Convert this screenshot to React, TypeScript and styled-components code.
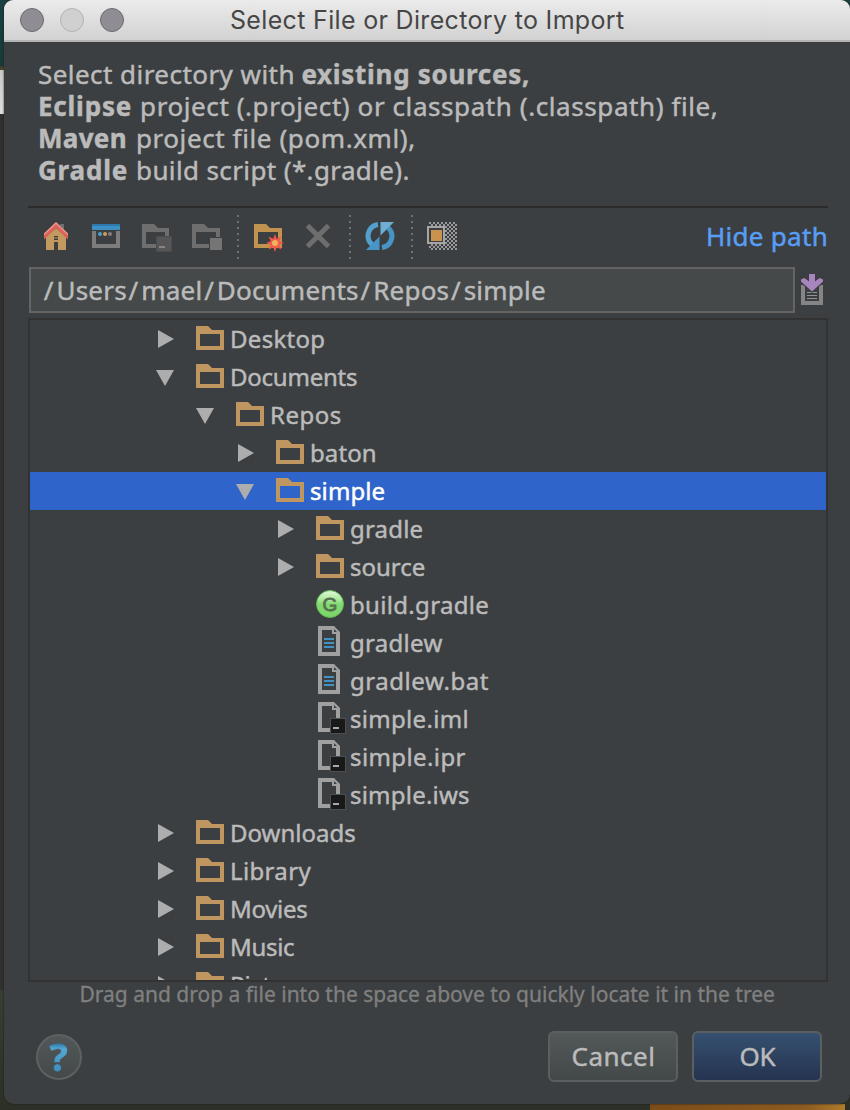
import React from 'react';
import styled, { createGlobalStyle } from 'styled-components';

const GlobalStyle = createGlobalStyle`
  * { box-sizing: border-box; }
  body { margin: 0; background: #2c3026; }
  svg { display: block; }
`;

const Desktop = styled.div`
  display: flex;
  width: 850px;
  height: 1110px;
  overflow: hidden;
  font-family: 'Noto Sans', sans-serif;
  background:
    linear-gradient(90deg, #7c4c18, #8d5c20 80%, #b07c2c) 650px 1104px / 195px 6px no-repeat,
    linear-gradient(#1b403f 0, #173b39 66px, #4a4528 67px, #4a4528 70px, #c9c9c9 70px, #dedede 114px, #303030 114px, #303030 990px, #393f2f 990px, #2c3026 1110px);
`;

const Window = styled.main`
  display: flex;
  flex-direction: column;
  width: 846px;
  height: 1104px;
  margin-left: 4px;
  overflow: hidden;
  border-radius: 9px 9px 10px 10px;
  background: #3c3f41;
  box-shadow: 0 0 2px #16191a;
`;

const TitleBar = styled.header`
  display: grid;
  grid-template-columns: 226px 1fr;
  align-items: center;
  height: 42px;
  border-bottom: 2px solid #b4b4b4;
  background: linear-gradient(#ebebeb, #d2d2d2);
`;

const WindowControls = styled.div`
  display: flex;
  gap: 16px;
  padding-left: 16px;
`;

const Control = styled.span<{ $disabled?: boolean }>`
  width: 24px;
  height: 24px;
  border-radius: 50%;
  border: 1px solid ${p => (p.$disabled ? '#b2b2b2' : '#6c6b70')};
  background: ${p => (p.$disabled ? '#d0d0d0' : '#8f8d93')};
`;

const Title = styled.h1`
  margin: 0;
  font: 400 25px/40px Inter, sans-serif;
  letter-spacing: 0.33px;
  color: #464646;
  white-space: nowrap;
`;

const Content = styled.div`
  display: flex;
  flex-direction: column;
  flex: 1;
  padding: 16px 22px 22px 24px;
  -webkit-text-stroke: 0.45px currentColor;
`;

const Description = styled.section`
  height: 148px;
  padding-left: 10px;
  font-size: 26px;
  line-height: 32px;
  color: #bbbbbb;
`;

const Line = styled.p<{ $gap: number }>`
  display: flex;
  gap: ${p => p.$gap}px;
  margin: 0;
  white-space: nowrap;
`;

const Text = styled.span<{ $track: number }>`
  letter-spacing: ${p => p.$track}px;
`;

const Strong = styled.b<{ $track: number }>`
  letter-spacing: ${p => p.$track}px;
`;

const Toolbar = styled.nav`
  display: flex;
  align-items: flex-start;
  height: 61px;
  padding: 7px 0 0 3px;
  border-top: 2px solid #2b2b2b;
`;

const ToolButton = styled.button`
  display: flex;
  align-items: center;
  justify-content: center;
  width: 50px;
  height: 44px;
  padding: 0;
  border: 0;
  background: none;
`;

const Separator = styled.span`
  width: 12px;
  height: 44px;
  background: repeating-linear-gradient(#707375 0 2px, transparent 2px 6px) 6px 0 / 2px 44px no-repeat;
`;

const PathToggle = styled.a`
  margin: 5px 0 0 auto;
  font-size: 26px;
  line-height: 32px;
  letter-spacing: 0.3px;
  color: #589df6;
`;

const PathRow = styled.div`
  display: flex;
  align-items: flex-start;
  gap: 6px;
  height: 51px;
  padding-left: 1px;
`;

const PathField = styled.div`
  display: flex;
  width: 766px;
  height: 46px;
  padding-left: 11px;
  border: 2px solid #646464;
  background: #45494a;
  font-size: 26px;
  line-height: 43px;
  letter-spacing: 0.2px;
  color: #bbbbbb;
`;

const Slash = styled.span`
  padding: 0 2.8px 0 1.8px;
`;

const HistoryButton = styled.button`
  margin-top: 6px;
  padding: 0;
  border: 0;
  background: none;
`;

const Tree = styled.div`
  height: 664px;
  overflow: hidden;
  border: 2px solid #323232;
`;

const Row = styled.div<{ $level: number; $selected?: boolean }>`
  display: grid;
  grid-template-columns: 40px 34px 1fr;
  align-items: start;
  height: 38px;
  padding-left: ${p => 126 + p.$level * 40}px;
  background: ${p => (p.$selected ? '#2f65ca' : 'transparent')};
  color: ${p => (p.$selected ? '#ffffff' : '#bbbbbb')};
`;

const Name = styled.span<{ $track: number }>`
  font-size: 24px;
  line-height: 38px;
  letter-spacing: ${p => p.$track}px;
  white-space: nowrap;
`;

const Hint = styled.p`
  margin: 0;
  padding: 0 0 0 51.5px;
  font-size: 21px;
  line-height: 24px;
  color: #808080;
  white-space: nowrap;
  -webkit-text-stroke-width: 0.3px;
`;

const Footer = styled.footer`
  display: flex;
  align-items: center;
  gap: 14px;
  margin-top: 25px;
  padding: 0 6.5px 0 7.5px;
`;

const HelpButton = styled.button`
  width: 46px;
  height: 46px;
  margin-right: auto;
  padding: 0;
  border: 2px solid #5e6162;
  border-radius: 50%;
  background: linear-gradient(#525759, #444949);
`;

const HelpMark = styled.span`
  display: block;
  font: 700 38px/41px 'Noto Sans', sans-serif;
  color: transparent;
  background: linear-gradient(#2f7db5 8px, #55a8d3 13px, #4596c6 28px, #3a88c0);
  background-clip: text;
  -webkit-text-stroke: 0.8px transparent;
`;

const Button = styled.button<{ $primary?: boolean; $track: number }>`
  width: 130px;
  height: 51px;
  padding: 0 0 1px 2px;
  border: 2px solid #5b5f60;
  border-radius: 6px;
  background: ${p => (p.$primary ? 'linear-gradient(#365070, #253450)' : 'linear-gradient(#535859, #434848)')};
  font: 400 26px/46px 'Noto Sans', sans-serif;
  letter-spacing: ${p => p.$track}px;
  color: #bbbbbb;
  -webkit-text-stroke: 0.45px currentColor;
`;

const Tool = ({ children, label }: { children: React.ReactNode; label: string }) => (
  <ToolButton aria-label={label}>
    <svg width="32" height="32" viewBox="0 0 32 32">{children}</svg>
  </ToolButton>
);

const HomeIcon = () => (
  <Tool label="Home">
    <path d="M20 3h4v9h-4z" fill="#6e6e6e" />
    <path d="M6 16 16 7l10 9v13h-8v-8h-4v8H6z" fill="#c29a5f" />
    <path d="M14 15h4v4h-4z" fill="#3c3f41" />
    <path d="M14 17h4" stroke="#c29a5f" />
    <path d="M4 12.500 16 1l12 11.500v6L16 7 4 18.500z" fill="#dd6157" />
    <path d="M4 12.500 16 1l12 11.500v2L16 3.200 4 14.500z" fill="#e58f88" />
  </Tool>
);

const DesktopIcon = () => (
  <Tool label="Desktop">
    <path d="M2 3h28v6H2z" fill="#3d8fc4" />
    <path d="M2 3h28v2H2z" fill="#2f78ad" />
    <path d="M4 10v15h24V10" fill="none" stroke="#7d7d7d" strokeWidth="4" />
    <circle cx="10" cy="13" r="2" fill="#4aa0d5" />
    <circle cx="15" cy="13" r="2" fill="#d19a58" />
    <circle cx="20" cy="13" r="2" fill="#808080" />
  </Tool>
);

const ProjectFolderIcon = () => (
  <Tool label="Project directory">
    <path fillRule="evenodd" d="M2 3h12l4 4h11v20H2zM6 11v12h19V11z" fill="#6e6e6e" />
    <path d="M16 15h16v16H16z" fill="#4a4c4d" />
    <path d="M17 16h14v14H17z" fill="#565656" />
    <path d="M19 25h6v2h-6z" fill="#858585" />
  </Tool>
);

const ModuleFolderIcon = () => (
  <Tool label="Module directory">
    <path fillRule="evenodd" d="M2 3h12l4 4h12v20H2zM6 11v12h20V11z" fill="#6e6e6e" />
    <path d="M19 16h13v13H19z" fill="#3c3f41" />
    <path d="M20 17h12v12H20z" fill="#757575" />
  </Tool>
);

const NewFolderIcon = () => (
  <Tool label="New folder">
    <path fillRule="evenodd" d="M2 3h12l4 4h12v20H2zM6 11v12h20V11z" fill="#c2934e" />
    <path d="m23 13 1.700 4.800 4.700-2.200-2.200 4.700 4.800 1.700-4.800 1.700 2.200 4.700-4.700-2.200L23 31l-1.700-4.800-4.700 2.200 2.200-4.700L14 22l4.800-1.700-2.200-4.700 4.700 2.200z" fill="#f4574a" />
    <circle cx="23" cy="22" r="3" fill="#eeb45d" />
  </Tool>
);

const DeleteIcon = () => (
  <Tool label="Delete">
    <path d="m5.500 4.500 21 21M26.500 4.500l-21 21" stroke="#6e6e6e" strokeWidth="5" />
  </Tool>
);

const RefreshIcon = () => (
  <Tool label="Refresh">
    <path d="M14 3.500A11.500 11.500 0 0 0 8 23.500" fill="none" stroke="#539fcd" strokeWidth="5" />
    <path d="M2 29h14V15z" fill="#4795c6" />
    <path d="M18 26.500A11.500 11.500 0 0 0 24 6.500" fill="none" stroke="#4795c6" strokeWidth="5" />
    <path d="M30 1H16v14z" fill="#6eadd4" />
    <path d="M15.500 1h1v28h-1z" fill="#3c3f41" />
  </Tool>
);

const HiddenFilesIcon = () => (
  <Tool label="Show hidden files">
    <defs>
      <pattern id="checker" x="3" y="1" width="4" height="4" patternUnits="userSpaceOnUse">
        <path d="M0 0h2v2H0zM2 2h2v2H2z" fill="#999999" />
      </pattern>
    </defs>
    <path d="M3 1h28v28H3z" fill="url(#checker)" />
    <path d="M1 5h18v18H1z" fill="#a5a5a5" />
    <path d="M3 7h14v14H3z" fill="#3c3f41" />
    <path d="M5 9h11v11H5z" fill="#c9924d" />
  </Tool>
);

const HistoryIcon = () => (
  <svg width="22" height="34" viewBox="0 0 22 34">
    <path d="M2 12v18h18V12" fill="none" stroke="#858585" strokeWidth="4" />
    <path d="M6 19.500h10M6 22.500h10M6 25.500h10" stroke="#929292" strokeWidth="1" />
    <path d="M8 0h6v7l4-3 4 2v4L11 20 0 10V6l4-2 4 3z" fill="#3c3f41" />
    <path d="M8 1h6v7.500l4.500-3.500L22 6.500v2L11 18.500 0 8.500v-2L3.500 5 8 8.500z" fill="#a985bd" />
  </svg>
);

const Arrow = ({ open }: { open: boolean }) => (
  <svg width="20" height="30" viewBox="0 0 20 30">
    <path d={open ? 'M0 12h18L9 28z' : 'M2 10v18l16-9z'} fill="#adadad" />
  </svg>
);

const FolderIcon = () => (
  <svg width="30" height="38" viewBox="0 0 30 38">
    <path fillRule="evenodd" d="M0 6h12l4 4h12v20H0zM4 14v12h20V14z" fill="#c09660" />
  </svg>
);

const GradleIcon = () => (
  <svg width="30" height="38" viewBox="0 0 30 38">
    <defs>
      <linearGradient id="ball" x2="0" y2="1">
        <stop offset="0" stopColor="#e2fada" />
        <stop offset="0.35" stopColor="#a9e898" />
        <stop offset="0.5" stopColor="#83d972" />
        <stop offset="1" stopColor="#79d568" />
      </linearGradient>
    </defs>
    <circle cx="14" cy="18" r="13.500" fill="url(#ball)" stroke="#62b558" />
    <text x="14" y="25" textAnchor="middle" fontFamily="Liberation Sans, sans-serif" fontSize="19" fill="#55724f" stroke="#55724f" strokeWidth="0.9">G</text>
  </svg>
);

const PageShape = () => (
  <path fillRule="evenodd" d="M2 2h16l6 6v24H2zM6 6v22h14V10h-4V6zM18 5v3h3z" fill="#a0a0a0" />
);

const TextFileIcon = () => (
  <svg width="32" height="38" viewBox="0 0 32 38">
    <PageShape />
    <path d="M8 15h10M8 19h10M8 23h10" stroke="#4292c2" strokeWidth="2" />
  </svg>
);

const IdeaFileIcon = () => (
  <svg width="32" height="38" viewBox="0 0 32 38">
    <PageShape />
    <path d="M14 18h16v16H14z" fill="#4c4f51" />
    <path d="M15 19h14v14H15z" fill="#191919" />
    <path d="M17 27h6v2h-6z" fill="#a8a8a8" />
  </svg>
);

type Kind = 'folder' | 'gradle' | 'text' | 'idea';
const icons: Record<Kind, React.FC> = {
  folder: FolderIcon,
  gradle: GradleIcon,
  text: TextFileIcon,
  idea: IdeaFileIcon,
};

interface Entry {
  name: string;
  level: number;
  kind: Kind;
  track: number;
  open?: boolean;
  selected?: boolean;
}

const entries: Entry[] = [
  { name: 'Desktop', level: 0, kind: 'folder', track: 0.3 },
  { name: 'Documents', level: 0, kind: 'folder', track: -0.23, open: true },
  { name: 'Repos', level: 1, kind: 'folder', track: 0.5, open: true },
  { name: 'baton', level: 2, kind: 'folder', track: 0.1 },
  { name: 'simple', level: 2, kind: 'folder', track: 0.1, open: true, selected: true },
  { name: 'gradle', level: 3, kind: 'folder', track: 0.2 },
  { name: 'source', level: 3, kind: 'folder', track: 0 },
  { name: 'build.gradle', level: 3, kind: 'gradle', track: 0.32 },
  { name: 'gradlew', level: 3, kind: 'text', track: 0.3 },
  { name: 'gradlew.bat', level: 3, kind: 'text', track: 0.55 },
  { name: 'simple.iml', level: 3, kind: 'idea', track: 0.3 },
  { name: 'simple.ipr', level: 3, kind: 'idea', track: 0.4 },
  { name: 'simple.iws', level: 3, kind: 'idea', track: 0.21 },
  { name: 'Downloads', level: 0, kind: 'folder', track: 0 },
  { name: 'Library', level: 0, kind: 'folder', track: 0.35 },
  { name: 'Movies', level: 0, kind: 'folder', track: -0.3 },
  { name: 'Music', level: 0, kind: 'folder', track: -0.3 },
  { name: 'Pictures', level: 0, kind: 'folder', track: 0 },
];

const path = ['Users', 'mael', 'Documents', 'Repos', 'simple'];

export default function App() {
  return (
    <Desktop>
      <GlobalStyle />
      <Window>
        <TitleBar>
          <WindowControls>
            <Control />
            <Control $disabled />
            <Control />
          </WindowControls>
          <Title>Select File or Directory to Import</Title>
        </TitleBar>
        <Content>
          <Description>
            <Line $gap={6.5}>
              <Text $track={0.45}>Select directory with</Text>
              <Strong $track={0.7}>existing sources,</Strong>
            </Line>
            <Line $gap={8}>
              <Strong $track={0.8}>Eclipse</Strong>
              <Text $track={0.58}>project (.project) or classpath (.classpath) file,</Text>
            </Line>
            <Line $gap={9}>
              <Strong $track={0.3}>Maven</Strong>
              <Text $track={0.6}>project file (pom.xml),</Text>
            </Line>
            <Line $gap={8}>
              <Strong $track={0.8}>Gradle</Strong>
              <Text $track={0.38}>build script (*.gradle).</Text>
            </Line>
          </Description>
          <Toolbar>
            <HomeIcon />
            <DesktopIcon />
            <ProjectFolderIcon />
            <ModuleFolderIcon />
            <Separator />
            <NewFolderIcon />
            <DeleteIcon />
            <Separator />
            <RefreshIcon />
            <Separator />
            <HiddenFilesIcon />
            <PathToggle>Hide path</PathToggle>
          </Toolbar>
          <PathRow>
            <PathField>
              {path.map(part => (
                <React.Fragment key={part}>
                  <Slash>/</Slash>
                  {part}
                </React.Fragment>
              ))}
            </PathField>
            <HistoryButton aria-label="Recent paths">
              <HistoryIcon />
            </HistoryButton>
          </PathRow>
          <Tree>
            {entries.map(entry => {
              const Icon = icons[entry.kind];
              return (
                <Row key={entry.name + entry.level} $level={entry.level} $selected={entry.selected}>
                  {entry.kind === 'folder' ? <Arrow open={!!entry.open} /> : <span />}
                  <Icon />
                  <Name $track={entry.track}>{entry.name}</Name>
                </Row>
              );
            })}
          </Tree>
          <Hint>Drag and drop a file into the space above to quickly locate it in the tree</Hint>
          <Footer>
            <HelpButton aria-label="Help">
              <HelpMark>?</HelpMark>
            </HelpButton>
            <Button $track={0.5}>Cancel</Button>
            <Button $primary $track={-0.3}>OK</Button>
          </Footer>
        </Content>
      </Window>
    </Desktop>
  );
}
